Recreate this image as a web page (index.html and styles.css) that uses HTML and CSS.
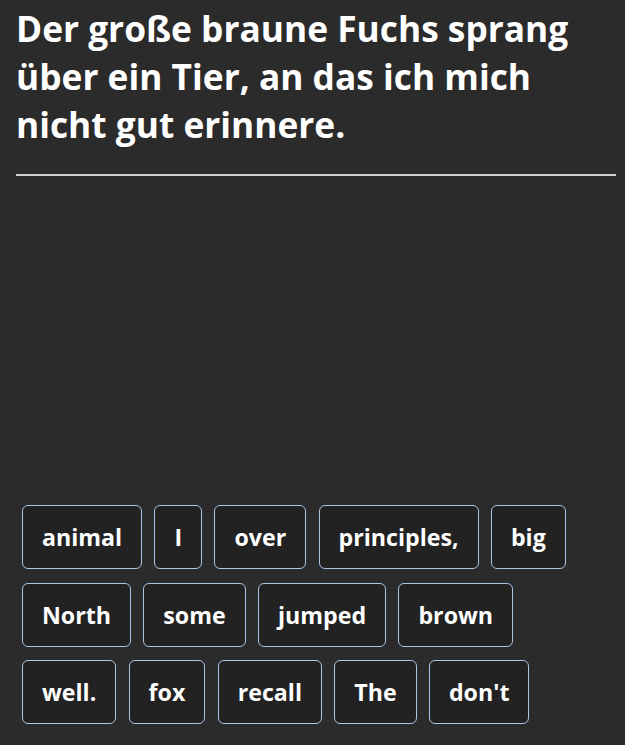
FILE: index.html
```html
<!DOCTYPE html>
<html lang="de">
<head>
<meta charset="utf-8">
<title>Satzbau</title>
<link rel="stylesheet" href="styles.css">
</head>
<body>
<main class="page">
  <h1 class="prompt">Der große braune Fuchs sprang über ein Tier, an das ich mich nicht gut erinnere.</h1>
  <hr class="divider">
  <div class="answer"></div>
  <div class="bank">
    <button class="word">animal</button>
    <button class="word">I</button>
    <button class="word">over</button>
    <button class="word">principles,</button>
    <button class="word">big</button>
    <button class="word">North</button>
    <button class="word">some</button>
    <button class="word">jumped</button>
    <button class="word">brown</button>
    <button class="word">well.</button>
    <button class="word">fox</button>
    <button class="word">recall</button>
    <button class="word">The</button>
    <button class="word">don't</button>
  </div>
</main>
</body>
</html>
```

FILE: styles.css
```css
html, body {
  margin: 0;
  padding: 0;
  background: #2b2b2b;
  color: #ffffff;
  font-family: "Open Sans", "Noto Sans", sans-serif;
}

.page {
  padding: 0 9px 0 16px;
}

.prompt {
  margin: 0;
  padding-top: 4px;
  font-size: 35.3px;
  line-height: 48px;
  font-weight: 700;
  color: #ffffff;
}

.divider {
  margin: 26px 0 0 0;
  border: 0;
  height: 2px;
  background: #d0d0d0;
}

.answer {
  height: 329px;
}

.bank {
  display: flex;
  flex-wrap: wrap;
  gap: 13.5px 12.3px;
  padding: 0 6px;
}

.word {
  font-family: inherit;
  font-size: 23.2px;
  line-height: 32px;
  font-weight: 700;
  color: #ffffff;
  background: #222222;
  border: 1px solid #a9c6e6;
  border-radius: 6px;
  padding: 15px 19px;
  margin: 0;
}
```
